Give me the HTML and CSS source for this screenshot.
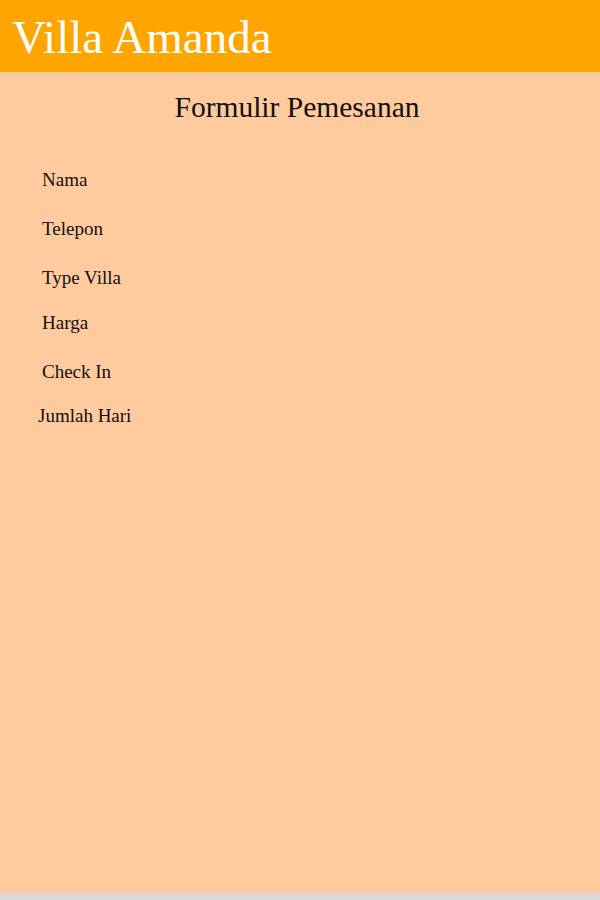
FILE: index.html
```html
<!DOCTYPE html>
<html lang="id">
<head>
<meta charset="utf-8">
<title>Villa Amanda</title>
<link rel="stylesheet" href="styles.css">
</head>
<body>
<div class="page">
  <header class="header">
    <h1 class="brand">Villa Amanda</h1>
  </header>
  <main class="content">
    <h2 class="form-title">Formulir Pemesanan</h2>
    <form class="form">
      <div class="row row-tall"><label class="label">Nama</label></div>
      <div class="row row-tall"><label class="label">Telepon</label></div>
      <div class="row row-mid"><label class="label">Type Villa</label></div>
      <div class="row row-tall"><label class="label">Harga</label></div>
      <div class="row row-short"><label class="label">Check In</label></div>
      <div class="row"><label class="label label-wide">Jumlah Hari</label></div>
    </form>
  </main>
</div>
</body>
</html>
```
FILE: styles.css
```css
html {
  background: #d9d9d9;
}
body {
  margin: 0;
  font-family: "Liberation Serif", "Times New Roman", serif;
  color: #111;
}
.page {
  height: 893px;
  background: #ffca9e;
  display: flex;
  flex-direction: column;
}
.header {
  background: #ffa500;
  height: 72px;
}
.brand {
  margin: 0;
  padding: 3px 12px 0;
  font-size: 47px;
  font-weight: normal;
  line-height: 69px;
  color: #fff;
}
.content {
  flex: 1;
}
.form-title {
  margin: 20px 0 0;
  padding-right: 6px;
  font-size: 29.5px;
  font-weight: normal;
  line-height: 30px;
  text-align: center;
}
.form {
  margin-top: 48px;
  display: flex;
  flex-direction: column;
}
.row {
  padding-left: 42px;
}
.row-tall {
  height: 49px;
}
.row-mid {
  height: 45px;
}
.row-short {
  height: 44px;
}
.label {
  font-size: 19px;
  line-height: 19px;
  display: block;
}
.label-wide {
  margin-left: -4px;
}
```
